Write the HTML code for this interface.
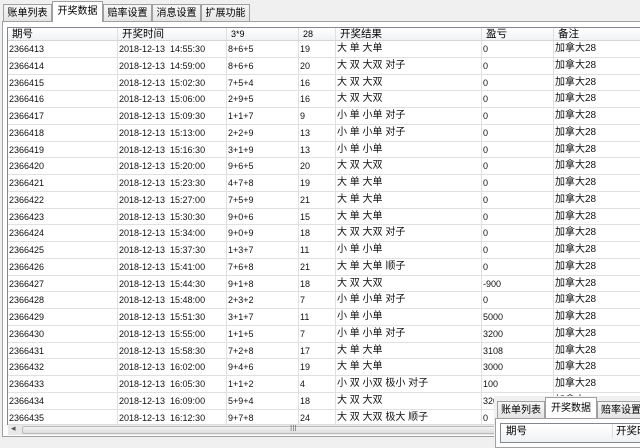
<!DOCTYPE html><html><head><meta charset="utf-8"><style>
*{margin:0;padding:0;box-sizing:border-box}
body{width:640px;height:441px;overflow:hidden;background:#f0f0f0;font-family:"Liberation Sans","Noto Sans CJK SC",sans-serif;position:relative}
.tab{position:absolute;border:1px solid #a0a0a0;border-bottom:none;background:linear-gradient(#f6f6f6,#e4e4e4);font-size:10px;text-align:center;color:#000;white-space:nowrap;overflow:hidden}
.tab.a{background:#fff;z-index:3}
#panel{position:absolute;left:2px;top:21px;width:640px;height:416px;border:1px solid #a0a0a0;background:#fff}
#tbl{position:absolute;left:7px;top:27px;width:640px;height:398px;border:1px solid #828790;background:#fff;overflow:hidden}
.hd{position:absolute;left:0;top:0;height:13px;width:640px;background:linear-gradient(#fff,#f1f2f4);border-bottom:1px solid #d5d5d5;font-size:10.5px}
.r{position:absolute;left:0;width:640px;height:16.75px;border-bottom:1px solid #e0e0e0;font-size:9px;line-height:16px;color:#111}
.c{position:absolute;top:0;height:100%;border-right:1px solid #e0e0e0;white-space:nowrap;padding-left:1px;overflow:hidden}
.hd .c{line-height:13px;padding-left:4px}
.z{font-size:10px}
#sb{position:absolute;left:8px;top:424px;width:632px;height:11px;background:#e8e8e8;border-top:1px solid #ddd}
#w2{position:absolute;left:494px;top:396px;width:146px;height:45px;background:#f0f0f0}
</style></head><body>
<div class="tab" style="left:3px;top:4px;width:49px;height:18px;line-height:17px">账单列表</div>
<div class="tab a" style="left:52px;top:1px;width:51px;height:21px;line-height:20px">开奖数据</div>
<div class="tab" style="left:103px;top:4px;width:49px;height:18px;line-height:17px">赔率设置</div>
<div class="tab" style="left:152px;top:4px;width:49px;height:18px;line-height:17px">消息设置</div>
<div class="tab" style="left:201px;top:4px;width:49px;height:18px;line-height:17px">扩展功能</div>
<div id="panel"></div>
<div id="tbl">
<div class="hd"><div class="c" style="left:0;width:110px">期号</div><div class="c" style="left:110px;width:109px">开奖时间</div><div class="c" style="left:219px;width:72px;font-size:9px">3*9</div><div class="c" style="left:291px;width:37px;font-size:9px">28</div><div class="c" style="left:328px;width:146px">开奖结果</div><div class="c" style="left:474px;width:72px">盈亏</div><div class="c" style="left:546px;width:94px">备注</div></div>
<div id="rows"></div>
</div>
<div id="sb"><span style="position:absolute;left:3px;top:-2px;font-size:9px;color:#555">◂</span><div style="position:absolute;left:14px;top:1px;width:550px;height:8px;background:linear-gradient(#f4f4f4,#dcdcdc);border:1px solid #bbb;border-radius:2px"></div><span style="position:absolute;left:282px;top:-1px;font-size:8px;color:#777">III</span></div>
<div id="w2">
<div class="tab" style="left:3px;top:5px;width:48px;height:17px;line-height:17px">账单列表</div>
<div class="tab a" style="left:51px;top:1px;width:52px;height:21px;line-height:21px">开奖数据</div>
<div class="tab" style="left:103px;top:5px;width:48px;height:17px;line-height:17px">赔率设置</div>
<div style="position:absolute;left:1px;top:22px;width:150px;height:30px;border:1px solid #a0a0a0;background:#fff"></div>
<div style="position:absolute;left:6px;top:27px;width:150px;height:20px;border:1px solid #828790;background:linear-gradient(#fff,#f1f2f4);font-size:10.5px;line-height:14px"><span style="position:absolute;left:5px">期号</span><span style="position:absolute;left:111px;border-left:1px solid #ddd;padding-left:3px">开奖时</span></div>
</div>
<script>
var d=[["2366413","14:55:30","8+6+5","19","大 单 大单","0"],["2366414","14:59:00","8+6+6","20","大 双 大双 对子","0"],["2366415","15:02:30","7+5+4","16","大 双 大双","0"],["2366416","15:06:00","2+9+5","16","大 双 大双","0"],["2366417","15:09:30","1+1+7","9","小 单 小单 对子","0"],["2366418","15:13:00","2+2+9","13","小 单 小单 对子","0"],["2366419","15:16:30","3+1+9","13","小 单 小单","0"],["2366420","15:20:00","9+6+5","20","大 双 大双","0"],["2366421","15:23:30","4+7+8","19","大 单 大单","0"],["2366422","15:27:00","7+5+9","21","大 单 大单","0"],["2366423","15:30:30","9+0+6","15","大 单 大单","0"],["2366424","15:34:00","9+0+9","18","大 双 大双 对子","0"],["2366425","15:37:30","1+3+7","11","小 单 小单","0"],["2366426","15:41:00","7+6+8","21","大 单 大单 顺子","0"],["2366427","15:44:30","9+1+8","18","大 双 大双","-900"],["2366428","15:48:00","2+3+2","7","小 单 小单 对子","0"],["2366429","15:51:30","3+1+7","11","小 单 小单","5000"],["2366430","15:55:00","1+1+5","7","小 单 小单 对子","3200"],["2366431","15:58:30","7+2+8","17","大 单 大单","3108"],["2366432","16:02:00","9+4+6","19","大 单 大单","3000"],["2366433","16:05:30","1+1+2","4","小 双 小双 极小 对子","100"],["2366434","16:09:00","5+9+4","18","大 双 大双","320"],["2366435","16:12:30","9+7+8","24","大 双 大双 极大 顺子","0"]];
var h="";d.forEach(function(r,i){h+='<div class="r" style="top:'+(13+i*16.75)+'px"><div class="c" style="left:0;width:110px">'+r[0]+'</div><div class="c" style="left:110px;width:109px">2018-12-13&nbsp;&nbsp;'+r[1]+'</div><div class="c" style="left:219px;width:72px">'+r[2]+'</div><div class="c" style="left:291px;width:37px">'+r[3]+'</div><div class="c z" style="left:328px;width:146px">'+r[4]+'</div><div class="c" style="left:474px;width:72px">'+r[5]+'</div><div class="c z" style="left:546px;width:94px">加拿大28</div></div>'});
document.getElementById("rows").innerHTML=h;
</script>
</body></html>
